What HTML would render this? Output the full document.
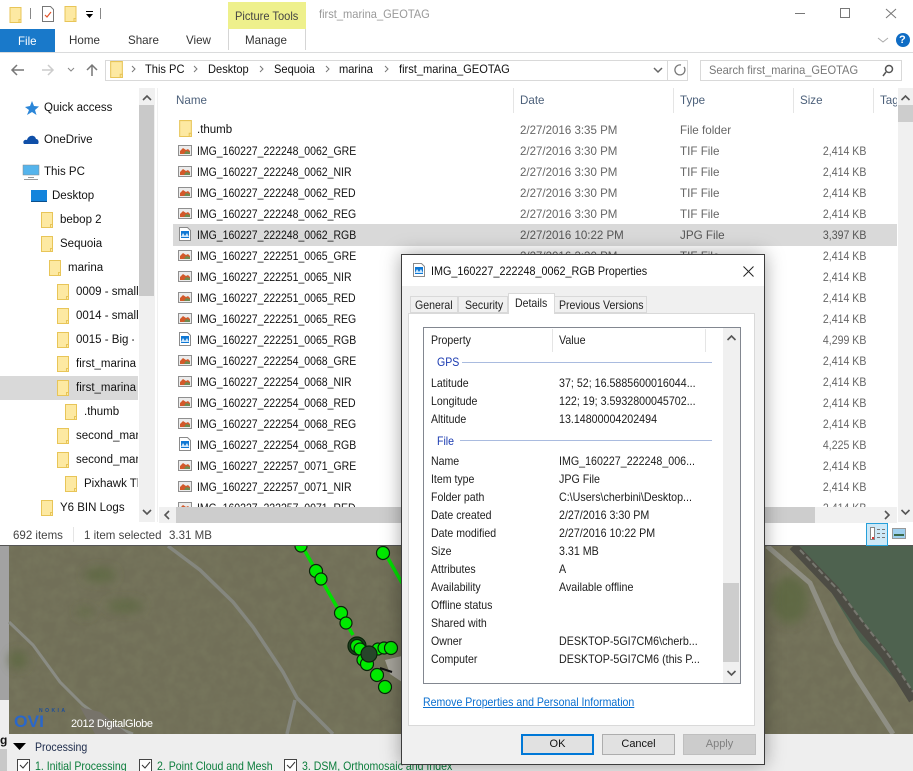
<!DOCTYPE html>
<html><head><meta charset="utf-8"><style>
html,body{margin:0;padding:0;background:#eee}
#r{position:relative;width:913px;height:771px;overflow:hidden;font:12px/16px "Liberation Sans",sans-serif;color:#111;background:#eee}
#r div{position:absolute;white-space:nowrap}
.a{transform:scaleX(.96);transform-origin:0 0}
.b{transform:scaleX(.925);transform-origin:0 0}
.c{transform:scaleX(.88);transform-origin:0 0}
.f{margin-top:1px;left:38px;transform:scaleX(.874);transform-origin:0 0;color:#111}
.m{margin-top:1px;left:361px;transform:scaleX(.96);transform-origin:0 0;color:#666}
.y{margin-top:1px;left:521px;transform:scaleX(.97);transform-origin:0 0;color:#666}
.k{margin-top:1px;right:31px;transform:scaleX(.88);transform-origin:100% 0;color:#666}
.n{overflow:hidden;color:#111;font-size:11.5px}
.h{color:#4c607a;top:93px;font-size:11.6px}
.l{left:431px;color:#1c1c1c;transform:scaleX(.88);transform-origin:0 0}
.v{left:559px;color:#1c1c1c;transform:scaleX(.89);transform-origin:0 0}
svg{position:absolute;overflow:visible}
.tb{color:#333;top:33px;font-size:11.6px}
.sep{background:#e5e5e5;width:1px}
.bt{text-align:center;font-size:11px;box-sizing:border-box;top:734px;width:73px;height:21px}
</style></head><body><div id="r">
<svg width="0" height="0"><defs>
<symbol id="fo" viewBox="0 0 12 16"><path d="M.5.5h11v15H.5z" fill="#fde9a2" stroke="#e8c558"/><path d="M9.500 12.500h2v3h-2z" fill="#fde9a2" stroke="#e8c558"/></symbol>
<symbol id="ti" viewBox="0 0 14 11"><path d="M.5.500h13v10H.5z" fill="#ececec" stroke="#8f8f8f"/><path d="M2 9V6l3-3 3 2 2-1 2 2v3z" fill="#d2592a"/><path d="M6 9l2-3 4 1v2z" fill="#6f8a50"/></symbol>
<symbol id="jp" viewBox="0 0 12 14"><path d="M.5.500h8l3 3v10H.5z" fill="#fff" stroke="#8a8a8a"/><path d="M2 4h8v7H2z" fill="#0f78d4"/><path d="M2 10l2-4 2 3 2-3 2 4z" fill="#cfe7fb"/></symbol>
</defs></svg>

<!-- Map -->
<svg style="left:0;top:546px" width="913" height="188" viewBox="0 546 913 188">
<defs><filter id="nz" x="0" y="0" width="100%" height="100%"><feTurbulence type="fractalNoise" baseFrequency=".09" numOctaves="3" seed="4"/><feColorMatrix values="0 0 0 0 .25  0 0 0 0 .27  0 0 0 0 .15  .9 .9 0 0 -.65"/></filter>
<filter id="bl"><feGaussianBlur stdDeviation="5"/></filter></defs>
<rect x="0" y="546" width="9" height="154" fill="#a2a2a2"/><rect x="0" y="700" width="9" height="34" fill="#eee"/>
<rect x="9" y="546" width="904" height="188" fill="#716f58"/>
<rect x="9" y="546" width="904" height="188" filter="url(#nz)" opacity=".3"/>
<g filter="url(#bl)" fill="#5c6840" opacity=".8"><ellipse cx="100" cy="575" rx="16" ry="7"/><ellipse cx="125" cy="606" rx="18" ry="6"/><ellipse cx="85" cy="612" rx="8" ry="4"/><ellipse cx="18" cy="660" rx="9" ry="9"/><ellipse cx="790" cy="600" rx="18" ry="24"/></g>
<path d="M9 622L33 645 60 682 83 705 110 725 133 734" fill="none" stroke="#8a8c84" stroke-width="3"/>
<path d="M168 546L200 570 233 602 253 627 283 672 297 698 333 734M295 700L287 734" fill="none" stroke="#85877f" stroke-width="3.500"/>
<path d="M767 546L810 583 822 610 837 643 855 675 893 734" fill="none" stroke="#8f8f84" stroke-width="5"/>
<path d="M795 546H913V700L860 640 830 590z" fill="#4e624f"/>
<path d="M793 546L835 590 860 625 885 655 913 700" fill="none" stroke="#4d4c44" stroke-width="9"/>
<path d="M800 550L840 592 866 626 890 657 913 692" fill="none" stroke="#77776f" stroke-width="2" stroke-dasharray="6 3"/>
<path d="M385 660L402 656V682L390 674z" fill="#a5a39a"/><path d="M380 668L392 672" stroke="#111" stroke-width="2"/>
<path d="M80 707L100 712 128 734H95z" fill="#77736a"/>
<path d="M302 546L353 635M385 553L402 583" stroke="#00e000" stroke-width="3.500" fill="none"/>
<g fill="#00ea00" stroke="#0a240a" stroke-width="1.200">
<circle cx="301" cy="546" r="6"/><circle cx="316" cy="571" r="6.500"/><circle cx="321" cy="579" r="6"/><circle cx="341" cy="613" r="6.500"/><circle cx="346" cy="623" r="6"/>
<circle cx="357" cy="646" r="9" fill="#1d3d1d"/><circle cx="357" cy="646" r="6.500"/><circle cx="360" cy="649" r="6"/><circle cx="363" cy="660" r="6"/><circle cx="367" cy="664" r="6.500"/><circle cx="377" cy="675" r="6.500"/><circle cx="385" cy="687" r="6.500"/><circle cx="378" cy="649" r="6"/><circle cx="384" cy="648" r="6"/><circle cx="391" cy="648" r="6.500"/><circle cx="383" cy="553" r="6.500"/>
<circle cx="369" cy="654" r="8" fill="#27452a"/></g>
<text x="14" y="727" font-family="Liberation Sans" font-weight="bold" font-size="17" fill="#2a67c9" textLength="30" lengthAdjust="spacingAndGlyphs">OVI</text>
<text x="39" y="712" font-family="Liberation Sans" font-weight="bold" font-size="5" fill="#1b4d9b" textLength="26">NOKIA</text>
<text x="71" y="727" font-family="Liberation Sans" font-size="11" fill="#fff" textLength="82">2012 DigitalGlobe</text>
</svg>
<div style="left:0;top:734px;width:913px;height:37px;background:#eee"></div>
<div style="left:0;top:732px;font-weight:bold;font-size:12px;width:7px;overflow:hidden;color:#111">g</div>
<div style="left:0;top:749px;width:7px;height:22px;background:#c8c8c8"></div>
<svg style="left:13px;top:743px" width="14" height="7"><path d="M0 0h13L6.500 7z" fill="#000"/></svg>
<div class="c" style="left:35px;top:739px;color:#1c2a4a">Processing</div>
<svg style="left:17px;top:759px" width="13" height="13"><path d="M.5.500h12v12H.5z" fill="#fff" stroke="#444"/><path d="M3 6l3 3 5-6" fill="none" stroke="#333"/></svg>
<svg style="left:139px;top:759px" width="13" height="13"><path d="M.5.500h12v12H.5z" fill="#fff" stroke="#444"/><path d="M3 6l3 3 5-6" fill="none" stroke="#333"/></svg>
<svg style="left:284px;top:759px" width="13" height="13"><path d="M.5.500h12v12H.5z" fill="#fff" stroke="#444"/><path d="M3 6l3 3 5-6" fill="none" stroke="#333"/></svg>
<div class="c" style="left:35px;top:758px;color:#0c7d3c">1. Initial Processing</div>
<div class="c" style="left:157px;top:758px;color:#0c7d3c">2. Point Cloud and Mesh</div>
<div class="c" style="left:302px;top:758px;color:#0c7d3c">3. DSM, Orthomosaic and Index</div>

<!-- Explorer -->
<div style="left:0;top:0;width:913px;height:545px;background:#fff;border-bottom:1px solid #555"></div>
<svg style="left:9px;top:7px" width="13" height="16"><use href="#fo" width="13" height="16"/></svg>
<div style="left:30px;top:8px;width:1px;height:11px;background:#888"></div>
<svg style="left:42px;top:6px" width="12" height="16"><path d="M.5.500h8l3 3v12H.5z" fill="#fff" stroke="#777"/><path d="M3 9l2 2 4-5" fill="none" stroke="#e2532a" stroke-width="1.200"/></svg>
<svg style="left:64px;top:6px" width="13" height="16"><use href="#fo" width="13" height="16"/></svg>
<svg style="left:85px;top:11px" width="9" height="8"><path d="M1 .5h7" stroke="#000"/><path d="M1 3h7L4.500 7z" fill="#000"/></svg>
<div style="left:100px;top:8px;width:1px;height:11px;background:#888"></div>
<div style="left:228px;top:2px;width:78px;height:27px;background:#eef08c"></div>
<div class="b" style="left:235px;top:8px;color:#444">Picture Tools</div>
<div class="b" style="left:319px;top:6px;color:#999">first_marina_GEOTAG</div>
<div style="left:0;top:29px;width:55px;height:23px;background:#1979ca"></div>
<div class="a" style="left:18px;top:33px;color:#fff">File</div>
<div class="tb" style="left:69px">Home</div><div class="tb" style="left:128px">Share</div><div class="tb" style="left:186px">View</div><div class="tb" style="left:245px">Manage</div>
<div style="left:228px;top:29px;width:1px;height:21px;background:#d5d5d5"></div><div style="left:305px;top:29px;width:1px;height:21px;background:#d5d5d5"></div>
<div style="left:0;top:52px;width:913px;height:1px;background:#dadbdc"></div>
<svg style="left:0;top:0" width="913" height="90">
<path d="M795 13.500h10" stroke="#777"/><path d="M840.500 8.500h9v9h-9z" fill="none" stroke="#777"/><path d="M886 9l10 9M896 9l-10 9" stroke="#777" fill="none"/>
<path d="M878 38l5 4 5-4" fill="none" stroke="#aaa"/><circle cx="903" cy="40" r="7" fill="#0f6cc4"/>
<path d="M12 70h12M17 65l-5 5 5 5" fill="none" stroke="#777" stroke-width="1.500"/><path d="M42 70h11M48 65l5 5-5 5" fill="none" stroke="#ccc" stroke-width="1.500"/><path d="M68 68l3 3 3-3" fill="none" stroke="#888"/><path d="M92 76V65M87 70l5-5 5 5" fill="none" stroke="#777" stroke-width="1.500"/>
<path d="M654 68l4 4 4-4" fill="none" stroke="#666" stroke-width="1.500"/><path d="M681 65a5 5 0 1 0 3 2" fill="none" stroke="#777" stroke-width="1.300"/>
<circle cx="889" cy="69" r="3.500" fill="none" stroke="#555" stroke-width="1.500"/><path d="M886 72l-3 4" stroke="#555" stroke-width="1.500"/>
<path d="M132 66l3 3-3 3M194 66l3 3-3 3M260 66l3 3-3 3M326 66l3 3-3 3M385 66l3 3-3 3" fill="none" stroke="#777"/>
</svg>
<div style="left:899px;top:32px;font:bold 11px/16px 'Liberation Sans';color:#fff">?</div>
<div style="left:105px;top:60px;height:19px;width:581px;border:1px solid #d9d9d9"></div>
<div style="left:667px;top:60px;width:1px;height:20px;background:#d9d9d9"></div>
<svg style="left:110px;top:61px" width="13" height="17"><use href="#fo" width="13" height="17"/></svg>
<div class="b" style="left:145px;top:61px">This PC</div><div class="b" style="left:208px;top:61px">Desktop</div><div class="b" style="left:274px;top:61px">Sequoia</div><div class="b" style="left:339px;top:61px">marina</div><div class="b" style="left:399px;top:61px">first_marina_GEOTAG</div>
<div style="left:700px;top:60px;width:200px;height:19px;border:1px solid #d9d9d9"></div>
<div class="b" style="left:709px;top:62px;color:#777">Search first_marina_GEOTAG</div>

<!-- Nav pane -->
<div style="left:139px;top:88px;width:16px;height:434px;background:#f0f0f0"></div>
<div style="left:139px;top:105px;width:15px;height:191px;background:#c9c9c9"></div>
<svg style="left:139px;top:88px" width="16" height="434"><path d="M4 12l4-4 4 4M4 422l4 4 4-4" fill="none" stroke="#555" stroke-width="1.600"/></svg>
<div style="left:0;top:376px;width:138px;height:24px;background:#d9d9d9"></div>
<svg style="left:25px;top:101px" width="14" height="14"><path d="M7 0l2 5 5 .5-4 3.500 1.500 5L7 11l-5 3 2-5-4-3 5-1z" fill="#2b86d8"/></svg>
<svg style="left:23px;top:134px" width="16" height="10"><path d="M1 10c-2-3 1-5 3-4 1-5 8-6 9-1 3 0 3 4 2 5z" fill="#0f4fa8"/></svg>
<svg style="left:23px;top:165px" width="16" height="15"><rect width="16" height="10" fill="#55b4ec" stroke="#888" stroke-width=".5"/><path d="M5 12.500h6M1 14.500h14" stroke="#999"/></svg>
<svg style="left:31px;top:190px" width="16" height="12"><rect width="16" height="11" fill="#1384dc"/><path d="M0 11.500h16" stroke="#0a4f8c"/></svg>
<svg style="left:41px;top:212px" width="12" height="16"><use href="#fo" width="12" height="16"/></svg>
<svg style="left:41px;top:236px" width="12" height="16"><use href="#fo" width="12" height="16"/></svg>
<svg style="left:49px;top:260px" width="12" height="16"><use href="#fo" width="12" height="16"/></svg>
<svg style="left:57px;top:284px" width="12" height="16"><use href="#fo" width="12" height="16"/></svg>
<svg style="left:57px;top:308px" width="12" height="16"><use href="#fo" width="12" height="16"/></svg>
<svg style="left:57px;top:332px" width="12" height="16"><use href="#fo" width="12" height="16"/></svg>
<svg style="left:57px;top:356px" width="12" height="16"><use href="#fo" width="12" height="16"/></svg>
<svg style="left:57px;top:380px" width="12" height="16"><use href="#fo" width="12" height="16"/></svg>
<svg style="left:65px;top:404px" width="12" height="16"><use href="#fo" width="12" height="16"/></svg>
<svg style="left:57px;top:428px" width="12" height="16"><use href="#fo" width="12" height="16"/></svg>
<svg style="left:57px;top:452px" width="12" height="16"><use href="#fo" width="12" height="16"/></svg>
<svg style="left:65px;top:476px" width="12" height="16"><use href="#fo" width="12" height="16"/></svg>
<svg style="left:41px;top:500px" width="12" height="16"><use href="#fo" width="12" height="16"/></svg>
<div class="n" style="left:44px;top:100px;width:90px">Quick access</div>
<div class="n" style="left:44px;top:132px;width:90px">OneDrive</div>
<div class="n" style="left:44px;top:164px;width:90px">This PC</div>
<div class="n" style="left:52px;top:188px;width:80px">Desktop</div>
<div class="n" style="left:60px;top:212px;width:78px">bebop 2</div>
<div class="n" style="left:60px;top:236px;width:78px">Sequoia</div>
<div class="n" style="left:68px;top:260px;width:70px">marina</div>
<div class="n" style="left:76px;top:284px;width:62px">0009 - small</div>
<div class="n" style="left:76px;top:308px;width:62px">0014 - small</div>
<div class="n" style="left:76px;top:332px;width:58px">0015 - Big - small</div>
<div class="n" style="left:76px;top:356px;width:62px">first_marina</div>
<div class="n" style="left:76px;top:380px;width:62px">first_marina</div>
<div class="n" style="left:84px;top:404px;width:54px">.thumb</div>
<div class="n" style="left:76px;top:428px;width:62px">second_marina</div>
<div class="n" style="left:76px;top:452px;width:62px">second_marina</div>
<div class="n" style="left:84px;top:476px;width:54px">Pixhawk Tlogs</div>
<div class="n" style="left:60px;top:500px;width:78px">Y6 BIN Logs</div>

<!-- Header -->
<div class="h" style="left:176px">Name</div><div class="h" style="left:520px">Date</div><div class="h" style="left:680px">Type</div><div class="h" style="left:800px">Size</div><div class="h" style="left:880px;width:17px;overflow:hidden">Tags</div>
<div class="sep" style="left:513px;top:88px;height:25px"></div><div class="sep" style="left:673px;top:88px;height:25px"></div><div class="sep" style="left:793px;top:88px;height:25px"></div><div class="sep" style="left:873px;top:88px;height:25px"></div>
<div style="left:157px;top:88px;width:1px;height:434px;background:#f0f0f0"></div>

<!-- Rows -->
<div style="left:173px;top:224px;width:724px;height:22px;background:#d9d9d9"></div>
<div style="left:159px;top:113px;width:738px;height:394px;overflow:hidden">
<svg style="left:20px;top:7px" width="13" height="17"><use href="#fo" width="13" height="17"/></svg>
<svg style="left:19px;top:32px" width="14" height="11"><use href="#ti" width="14" height="11"/></svg>
<svg style="left:19px;top:53px" width="14" height="11"><use href="#ti" width="14" height="11"/></svg>
<svg style="left:19px;top:74px" width="14" height="11"><use href="#ti" width="14" height="11"/></svg>
<svg style="left:19px;top:95px" width="14" height="11"><use href="#ti" width="14" height="11"/></svg>
<svg style="left:20px;top:114px" width="12" height="14"><use href="#jp" width="12" height="14"/></svg>
<svg style="left:19px;top:137px" width="14" height="11"><use href="#ti" width="14" height="11"/></svg>
<svg style="left:19px;top:158px" width="14" height="11"><use href="#ti" width="14" height="11"/></svg>
<svg style="left:19px;top:179px" width="14" height="11"><use href="#ti" width="14" height="11"/></svg>
<svg style="left:19px;top:200px" width="14" height="11"><use href="#ti" width="14" height="11"/></svg>
<svg style="left:20px;top:219px" width="12" height="14"><use href="#jp" width="12" height="14"/></svg>
<svg style="left:19px;top:242px" width="14" height="11"><use href="#ti" width="14" height="11"/></svg>
<svg style="left:19px;top:263px" width="14" height="11"><use href="#ti" width="14" height="11"/></svg>
<svg style="left:19px;top:284px" width="14" height="11"><use href="#ti" width="14" height="11"/></svg>
<svg style="left:19px;top:305px" width="14" height="11"><use href="#ti" width="14" height="11"/></svg>
<svg style="left:20px;top:324px" width="12" height="14"><use href="#jp" width="12" height="14"/></svg>
<svg style="left:19px;top:347px" width="14" height="11"><use href="#ti" width="14" height="11"/></svg>
<svg style="left:19px;top:368px" width="14" height="11"><use href="#ti" width="14" height="11"/></svg>
<svg style="left:19px;top:389px" width="14" height="11"><use href="#ti" width="14" height="11"/></svg>
<div class="f" style="top:8px;transform:none;font-size:11.5px">.thumb</div><div class="m" style="top:8px">2/27/2016 3:35 PM</div><div class="y" style="top:8px">File folder</div>
<div class="f" style="top:29px">IMG_160227_222248_0062_GRE</div><div class="m" style="top:29px">2/27/2016 3:30 PM</div><div class="y" style="top:29px">TIF File</div><div class="k" style="top:29px">2,414 KB</div>
<div class="f" style="top:50px">IMG_160227_222248_0062_NIR</div><div class="m" style="top:50px">2/27/2016 3:30 PM</div><div class="y" style="top:50px">TIF File</div><div class="k" style="top:50px">2,414 KB</div>
<div class="f" style="top:71px">IMG_160227_222248_0062_RED</div><div class="m" style="top:71px">2/27/2016 3:30 PM</div><div class="y" style="top:71px">TIF File</div><div class="k" style="top:71px">2,414 KB</div>
<div class="f" style="top:92px">IMG_160227_222248_0062_REG</div><div class="m" style="top:92px">2/27/2016 3:30 PM</div><div class="y" style="top:92px">TIF File</div><div class="k" style="top:92px">2,414 KB</div>
<div class="f" style="top:113px">IMG_160227_222248_0062_RGB</div><div class="m" style="top:113px;color:#555">2/27/2016 10:22 PM</div><div class="y" style="top:113px;color:#555">JPG File</div><div class="k" style="top:113px;color:#555">3,397 KB</div>
<div class="f" style="top:134px">IMG_160227_222251_0065_GRE</div><div class="m" style="top:134px">2/27/2016 3:30 PM</div><div class="y" style="top:134px">TIF File</div><div class="k" style="top:134px">2,414 KB</div>
<div class="f" style="top:155px">IMG_160227_222251_0065_NIR</div><div class="k" style="top:155px">2,414 KB</div>
<div class="f" style="top:176px">IMG_160227_222251_0065_RED</div><div class="k" style="top:176px">2,414 KB</div>
<div class="f" style="top:197px">IMG_160227_222251_0065_REG</div><div class="k" style="top:197px">2,414 KB</div>
<div class="f" style="top:218px">IMG_160227_222251_0065_RGB</div><div class="k" style="top:218px">4,299 KB</div>
<div class="f" style="top:239px">IMG_160227_222254_0068_GRE</div><div class="k" style="top:239px">2,414 KB</div>
<div class="f" style="top:260px">IMG_160227_222254_0068_NIR</div><div class="k" style="top:260px">2,414 KB</div>
<div class="f" style="top:281px">IMG_160227_222254_0068_RED</div><div class="k" style="top:281px">2,414 KB</div>
<div class="f" style="top:302px">IMG_160227_222254_0068_REG</div><div class="k" style="top:302px">2,414 KB</div>
<div class="f" style="top:323px">IMG_160227_222254_0068_RGB</div><div class="k" style="top:323px">4,225 KB</div>
<div class="f" style="top:344px">IMG_160227_222257_0071_GRE</div><div class="k" style="top:344px">2,414 KB</div>
<div class="f" style="top:365px">IMG_160227_222257_0071_NIR</div><div class="k" style="top:365px">2,414 KB</div>
<div class="f" style="top:386px">IMG_160227_222257_0071_RED</div><div class="k" style="top:386px">2,414 KB</div>
</div>

<!-- Scrollbars -->
<div style="left:898px;top:88px;width:15px;height:434px;background:#f0f0f0"></div>
<div style="left:898px;top:105px;width:15px;height:17px;background:#cdcdcd"></div>
<svg style="left:898px;top:88px" width="15" height="434"><path d="M3.500 12l4-4 4 4M3.500 422l4 4 4-4" fill="none" stroke="#555" stroke-width="1.600"/></svg>
<div style="left:159px;top:507px;width:738px;height:16px;background:#f0f0f0"></div>
<div style="left:176px;top:507px;width:639px;height:16px;background:#cdcdcd"></div>
<svg style="left:159px;top:507px" width="738" height="16"><path d="M10 4l-4 4 4 4M726 4l4 4-4 4" fill="none" stroke="#555" stroke-width="1.600"/></svg>

<!-- Status -->
<div class="a" style="left:13px;top:527px;color:#444">692 items</div><div style="left:73px;top:527px;width:1px;height:15px;background:#e5e5e5"></div>
<div class="a" style="left:84px;top:527px;color:#444">1 item selected</div><div class="a" style="left:169px;top:527px;color:#444">3.31 MB</div>
<div style="left:866px;top:523px;width:20px;height:21px;background:#cde8f7;border:1px solid #26a0da"></div>
<svg style="left:870px;top:527px" width="16" height="14"><path d="M.5.500h4v12h-4z" fill="#fff" stroke="#888"/><path d="M7 2.500h3M12 2.500h3M7 6.500h3M12 6.500h3M7 10.500h3M12 10.500h3" stroke="#777"/><path d="M2 10h2v2H2z" fill="#d33"/></svg>
<svg style="left:892px;top:528px" width="14" height="11"><rect x=".5" y=".5" width="13" height="10" fill="#9ed0ef" stroke="#999"/><path d="M2 8h10V6H2z" fill="#3a6a4a"/></svg>

<!-- Dialog -->
<div style="left:401px;top:254px;width:362px;height:509px;background:#f0f0f0;border:1px solid #3c3c3c;box-shadow:0 0 18px rgba(0,0,0,.35)"></div>
<div style="left:402px;top:255px;width:362px;height:31px;background:#fff"></div>
<svg style="left:413px;top:263px" width="12" height="14"><use href="#jp" width="12" height="14"/></svg>
<div style="left:431px;top:263px;color:#111;transform:scaleX(.9);transform-origin:0 0">IMG_160227_222248_0062_RGB Properties</div>
<svg style="left:743px;top:266px" width="11" height="11"><path d="M.5.500l10 10M10.500.500l-10 10" stroke="#222" fill="none"/></svg>
<div style="left:410px;top:296px;width:48px;height:17px;background:#f0f0f0;border:1px solid #d9d9d9;box-sizing:border-box"></div>
<div style="left:458px;top:296px;width:50px;height:17px;background:#f0f0f0;border:1px solid #d9d9d9;box-sizing:border-box"></div>
<div style="left:554px;top:296px;width:93px;height:17px;background:#f0f0f0;border:1px solid #d9d9d9;box-sizing:border-box"></div>
<div style="left:408px;top:313px;width:347px;height:413px;background:#fff;border:1px solid #d9d9d9;box-sizing:border-box"></div>
<div style="left:508px;top:293px;width:47px;height:21px;background:#fff;border:1px solid #d9d9d9;border-bottom:0;box-sizing:border-box"></div>
<div class="c" style="left:415px;top:297px;color:#222">General</div><div class="c" style="left:465px;top:297px;color:#222">Security</div><div class="c" style="left:515px;top:295px;color:#222">Details</div><div class="c" style="left:559px;top:297px;color:#222">Previous Versions</div>
<div style="left:423px;top:327px;width:318px;height:357px;border:1px solid #828790;box-sizing:border-box;background:#fff"></div>
<div style="left:723px;top:328px;width:17px;height:355px;background:#f0f0f0"></div>
<div style="left:723px;top:583px;width:16px;height:79px;background:#cdcdcd"></div>
<svg style="left:723px;top:328px" width="17" height="355"><path d="M4.500 12l4-4 4 4M4.500 343l4 4 4-4" fill="none" stroke="#555" stroke-width="1.600"/></svg>
<div class="sep" style="left:552px;top:329px;height:23px"></div><div class="sep" style="left:705px;top:329px;height:23px"></div>
<div class="l" style="top:332px">Property</div><div class="v" style="top:332px">Value</div>
<div class="c" style="left:437px;top:354px;color:#1a3ab0">GPS</div><div style="left:462px;top:362px;width:250px;height:1px;background:#a9bbdf"></div>
<div class="l" style="top:375px">Latitude</div><div class="v" style="top:375px">37; 52; 16.5885600016044...</div>
<div class="l" style="top:393px">Longitude</div><div class="v" style="top:393px">122; 19; 3.5932800045702...</div>
<div class="l" style="top:411px">Altitude</div><div class="v" style="top:411px">13.14800004202494</div>
<div class="c" style="left:437px;top:433px;color:#1a3ab0">File</div><div style="left:460px;top:440px;width:252px;height:1px;background:#a9bbdf"></div>
<div class="l" style="top:453px">Name</div><div class="v" style="top:453px">IMG_160227_222248_006...</div>
<div class="l" style="top:471px">Item type</div><div class="v" style="top:471px">JPG File</div>
<div class="l" style="top:489px">Folder path</div><div class="v" style="top:489px">C:\Users\cherbini\Desktop...</div>
<div class="l" style="top:507px">Date created</div><div class="v" style="top:507px">2/27/2016 3:30 PM</div>
<div class="l" style="top:525px">Date modified</div><div class="v" style="top:525px">2/27/2016 10:22 PM</div>
<div class="l" style="top:543px">Size</div><div class="v" style="top:543px">3.31 MB</div>
<div class="l" style="top:561px">Attributes</div><div class="v" style="top:561px">A</div>
<div class="l" style="top:579px">Availability</div><div class="v" style="top:579px">Available offline</div>
<div class="l" style="top:597px">Offline status</div>
<div class="l" style="top:615px">Shared with</div>
<div class="l" style="top:633px">Owner</div><div class="v" style="top:633px">DESKTOP-5GI7CM6\cherb...</div>
<div class="l" style="top:651px">Computer</div><div class="v" style="top:651px">DESKTOP-5GI7CM6 (this P...</div>
<div class="c" style="left:423px;top:694px;color:#0a6fd0;text-decoration:underline">Remove Properties and Personal Information</div>
<div class="bt" style="left:521px;background:#e1e1e1;border:2px solid #0078d7;line-height:17px;color:#111">OK</div>
<div class="bt" style="left:602px;background:#e1e1e1;border:1px solid #adadad;line-height:19px;color:#111">Cancel</div>
<div class="bt" style="left:683px;background:#ccc;border:1px solid #bfbfbf;line-height:19px;color:#808080">Apply</div>
</div></body></html>
